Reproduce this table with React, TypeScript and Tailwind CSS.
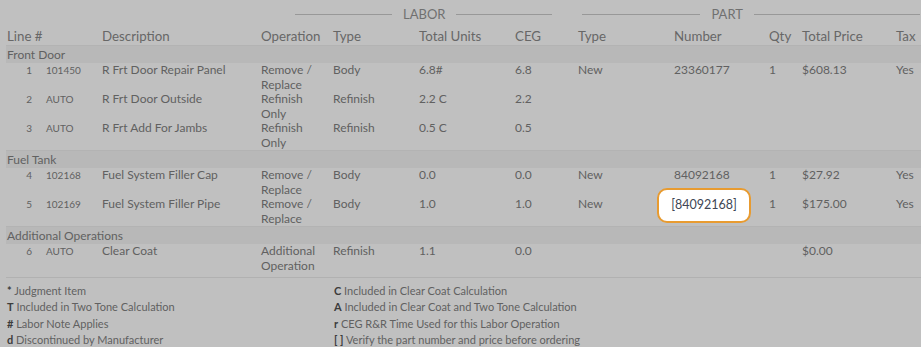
import React from "react";

type Line = {
  no: string;
  code: string;
  desc: string;
  op: string[];
  type: string;
  units: string;
  ceg: string;
  partType?: string;
  number?: string;
  qty?: string;
  price?: string;
  tax?: string;
  flagged?: boolean;
};

type Section = { title: string; lines: Line[] };

const sections: Section[] = [
  {
    title: "Front Door",
    lines: [
      { no: "1", code: "101450", desc: "R Frt Door Repair Panel", op: ["Remove /", "Replace"], type: "Body", units: "6.8#", ceg: "6.8", partType: "New", number: "23360177", qty: "1", price: "$608.13", tax: "Yes" },
      { no: "2", code: "AUTO", desc: "R Frt Door Outside", op: ["Refinish", "Only"], type: "Refinish", units: "2.2 C", ceg: "2.2" },
      { no: "3", code: "AUTO", desc: "R Frt Add For Jambs", op: ["Refinish", "Only"], type: "Refinish", units: "0.5 C", ceg: "0.5" },
    ],
  },
  {
    title: "Fuel Tank",
    lines: [
      { no: "4", code: "102168", desc: "Fuel System Filler Cap", op: ["Remove /", "Replace"], type: "Body", units: "0.0", ceg: "0.0", partType: "New", number: "84092168", qty: "1", price: "$27.92", tax: "Yes" },
      { no: "5", code: "102169", desc: "Fuel System Filler Pipe", op: ["Remove /", "Replace"], type: "Body", units: "1.0", ceg: "1.0", partType: "New", number: "[84092168]", qty: "1", price: "$175.00", tax: "Yes", flagged: true },
    ],
  },
  {
    title: "Additional Operations",
    lines: [
      { no: "6", code: "AUTO", desc: "Clear Coat", op: ["Additional", "Operation"], type: "Refinish", units: "1.1", ceg: "0.0", price: "$0.00" },
    ],
  },
];

const legend: [string, string][] = [
  ["*", "Judgment Item"],
  ["C", "Included in Clear Coat Calculation"],
  ["T", "Included in Two Tone Calculation"],
  ["A", "Included in Clear Coat and Two Tone Calculation"],
  ["#", "Labor Note Applies"],
  ["r", "CEG R&R Time Used for this Labor Operation"],
  ["d", "Discontinued by Manufacturer"],
  ["[ ]", "Verify the part number and price before ordering"],
];

const cols =
  "grid grid-cols-[96px_159px_72px_86px_96px_63px_96px_95px_33px_94px_1fr]";

function GroupRule({ label, left, right }: { label: string; left: number; right: number }) {
  return (
    <div className="flex items-center">
      <div className="h-px bg-[#989898]" style={{ width: left }} />
      <span className="px-[11px] text-[13px] leading-none text-[#707070]">{label}</span>
      <div className="h-px bg-[#989898]" style={{ width: right }} />
    </div>
  );
}

export default function App() {
  return (
    <div
      className="h-[347px] w-[921px] overflow-hidden bg-[#c0c0c0] text-[#616161]"
      style={{ fontFamily: "Lato, 'Open Sans', sans-serif" }}
    >
      {/* column group captions */}
      <div className="flex h-[28px] items-center pl-[295px]">
        <GroupRule label="LABOR" left={97} right={96} />
        <div className="w-[30px]" />
        <GroupRule label="PART" left={118} right={166} />
      </div>

      <div className="ml-[6px]">
        {/* column headings */}
        <div className={`${cols} h-[17px] text-[13.3px] leading-[17px] text-[#676767]`}>
          <div className="pl-px">Line #</div>
          <div>Description</div>
          <div>Operation</div>
          <div>Type</div>
          <div>Total Units</div>
          <div>CEG</div>
          <div>Type</div>
          <div>Number</div>
          <div>Qty</div>
          <div>Total Price</div>
          <div>Tax</div>
        </div>

        {sections.map((s) => (
          <div key={s.title}>
            <div className="h-[18px] border-t border-[#b3b3b3] bg-[#b8b8b8] pl-px text-[12px] leading-[17px]">
              {s.title}
            </div>
            {s.lines.map((l) => (
              <div key={l.no} className={`${cols} h-[29px] text-[12px] leading-[14.5px]`}>
                <div className="flex pl-px text-[10px] leading-[14px]">
                  <span className="w-[25px] text-right">{l.no}</span>
                  <span className="ml-[14px]">{l.code}</span>
                </div>
                <div>{l.desc}</div>
                <div>
                  {l.op.map((t) => (
                    <div key={t}>{t}</div>
                  ))}
                </div>
                <div>{l.type}</div>
                <div>{l.units}</div>
                <div>{l.ceg}</div>
                <div>{l.partType}</div>
                <div className="relative">
                  {l.flagged ? (
                    <div className="absolute left-[-17px] top-[-9px] flex h-[35px] w-[94px] items-center justify-center rounded-[10px] border-2 border-[#e89b30] bg-white text-[12.5px] text-[#404654]">
                      {l.number}
                    </div>
                  ) : (
                    l.number
                  )}
                </div>
                <div>{l.qty}</div>
                <div>{l.price}</div>
                <div>{l.tax}</div>
              </div>
            ))}
          </div>
        ))}

        {/* legend */}
        <div className="mt-[4px] border-t border-[#b1b1b1] pt-[5px]">
          <div className="grid grid-cols-[327px_1fr] pl-px text-[11px] leading-[16.4px]">
            {legend.map(([k, v]) => (
              <div key={k}>
                <span className="font-bold text-[#3c3c3c]">{k}</span> {v}
              </div>
            ))}
          </div>
        </div>
      </div>
    </div>
  );
}
